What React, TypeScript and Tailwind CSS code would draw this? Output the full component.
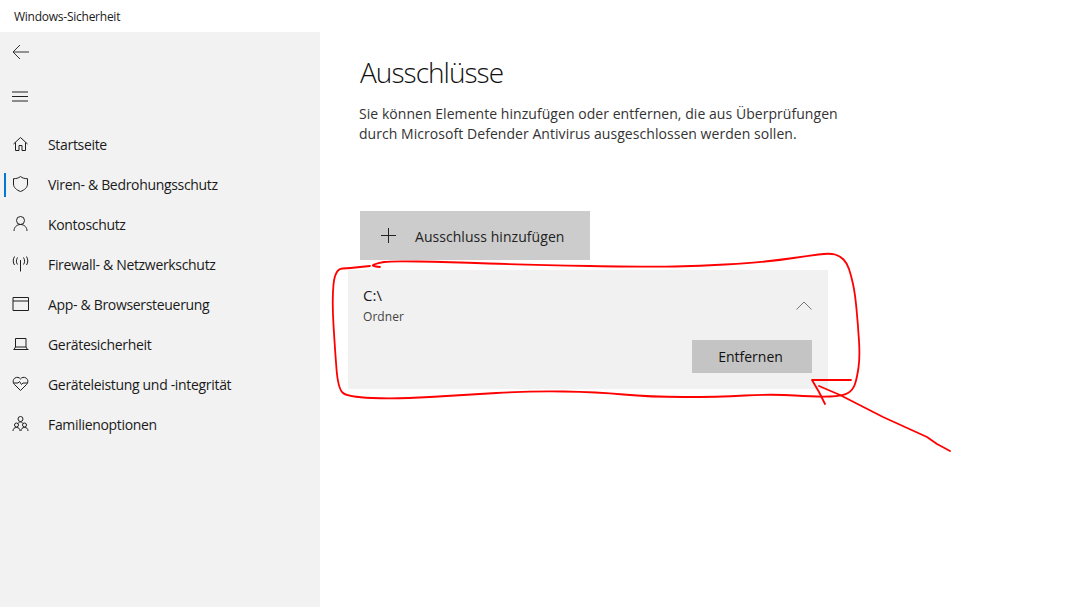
import type { ReactNode } from 'react'

type NavItem = { label: string; icon: ReactNode; active?: boolean }

function Glyph({ children }: { children: ReactNode }) {
  return (
    <svg width="18" height="18" viewBox="0 0 18 18" fill="none" stroke="#1f1f1f" strokeWidth="1" className="shrink-0">
      {children}
    </svg>
  )
}

const navItems: NavItem[] = [
  {
    label: 'Startseite',
    icon: <Glyph><path d="M1.5 9 8.5 2.5 15.5 9M3.5 7.5V15.5H7V10.5H10V15.5H13.5V7.5" /></Glyph>,
  },
  {
    label: 'Viren- & Bedrohungsschutz',
    active: true,
    icon: <Glyph><path d="M8.5 1.5C6.5 3.2 4 3.7 1.5 3.7V9C1.5 12.5 4.5 15 8.5 16.5 12.5 15 15.5 12.5 15.5 9V3.7C13 3.7 10.5 3.2 8.5 1.5Z" /></Glyph>,
  },
  {
    label: 'Kontoschutz',
    icon: <Glyph><circle cx="8.5" cy="5.5" r="4" /><path d="M2 16C2 12.5 4.5 9.5 8.5 9.5S15 12.5 15 16" /></Glyph>,
  },
  {
    label: 'Firewall- & Netzwerkschutz',
    icon: <Glyph><path d="M8.5 5V16.5M5.5 2.5C4 5 4 7.5 5.5 9.5M11.5 2.5C13 5 13 7.5 11.5 9.5M2.5 1.5C.8 4.5.8 7.5 2.5 10M14.5 1.5C16.2 4.5 16.2 7.5 14.5 10" /></Glyph>,
  },
  {
    label: 'App- & Browsersteuerung',
    icon: <Glyph><path d="M1 2.5H16.5V15.5H1ZM1 6H16.5" /></Glyph>,
  },
  {
    label: 'Gerätesicherheit',
    icon: <Glyph><path d="M3.5 3.5H14V12H3.5ZM1.5 14.5H16.5M3.5 12 2 14.5M14 12 15.5 14.5" /></Glyph>,
  },
  {
    label: 'Geräteleistung und -integrität',
    icon: <Glyph><path d="M8.5 15.5 2.5 9.5C.5 7.5.8 4.5 3 3 5 1.8 7.2 2.2 8.5 4 9.8 2.2 12 1.8 14 3 16.2 4.5 16.5 7.5 14.5 9.5ZM1.5 8H6L7.5 6.5 9.5 9.5 11 8H15.5" /></Glyph>,
  },
  {
    label: 'Familienoptionen',
    icon: <Glyph><circle cx="8.5" cy="4" r="2.5" /><circle cx="4.5" cy="10" r="2" /><circle cx="12.5" cy="10" r="2" /><path d="M1 16C1 13.5 2.5 12.5 4.5 12.5S8 13.5 8 16M9 16C9 13.5 10.5 12.5 12.5 12.5S16 13.5 16 16M6 8.5C6.5 7.5 7.5 7 8.5 7S10.5 7.5 11 8.5" /></Glyph>,
  },
]

const outline: [number, number][] = [
  [380, 267], [370, 266], [378, 263], [390, 261], [447, 262], [530, 265], [650, 267], [700, 266], [750, 263], [780, 260], [807, 256], [830, 253],
  [840, 256], [847, 263], [851, 275], [855, 293], [858, 325], [860, 357], [857, 378], [853, 390], [843, 396], [817, 397], [773, 394], [717, 397],
  [650, 397], [597, 392], [530, 391], [463, 395], [397, 399], [347, 397], [338, 388], [335, 350], [332, 300], [335, 269], [350, 268], [370, 266],
]

// rounds the hand-drawn line off through the midpoints
function smooth(points: [number, number][]) {
  let d = `M${points[0][0]} ${points[0][1]}`
  for (let i = 1; i < points.length - 1; i++) {
    const [x, y] = points[i]
    const [nx, ny] = points[i + 1]
    d += `Q${x} ${y} ${(x + nx) / 2} ${(y + ny) / 2}`
  }
  const [lx, ly] = points[points.length - 1]
  return `${d}L${lx} ${ly}`
}

function Annotation() {
  return (
    <svg width="1079" height="607" viewBox="0 0 1079 607" fill="none" stroke="#ff0000" strokeWidth="1.8" strokeLinejoin="round" strokeLinecap="round" className="pointer-events-none absolute left-0 top-0">
      <path d={smooth(outline)} />
      <path d="M851 380H812L819 392 825 404" />
      <path d="M819 386 840 395 883 417 927 437 937 444 950 451" />
    </svg>
  )
}

export default function App() {
  return (
    <div className="relative flex h-[607px] w-[1079px] flex-col overflow-hidden bg-white font-['Open_Sans','Liberation_Sans',sans-serif] text-[#1a1a1a]">
      <div className="flex h-8 shrink-0 items-center pl-[14px] pt-[2px] text-[12px] tracking-[-0.25px]">Windows-Sicherheit</div>
      <div className="flex min-h-0 flex-1">
        <aside className="flex w-[320px] shrink-0 flex-col bg-[#f2f2f2]">
          <div className="flex h-10 items-center pl-3">
            <svg width="18" height="16" viewBox="0 0 18 16" fill="none" stroke="#333" strokeWidth="1">
              <path d="M17 8H1M8 1 1 8 8 15" />
            </svg>
          </div>
          <div className="mt-1 flex h-10 items-center pl-3">
            <svg width="17" height="11" viewBox="0 0 17 11" fill="none" stroke="#222" strokeWidth="1">
              <path d="M0 1H16M0 5.5H16M0 10H16" />
            </svg>
          </div>
          <nav className="mt-2 flex flex-col">
            {navItems.map((item) => (
              <div key={item.label} className="relative flex h-10 items-center pl-[12px] text-[14px] tracking-[-0.32px]">
                {item.active && <span className="absolute left-1 top-[9px] h-6 w-[2px] bg-[#0078d4]" />}
                {item.icon}
                <span className="ml-[18px]">{item.label}</span>
              </div>
            ))}
          </nav>
        </aside>
        <main className="flex-1">
          <h1 className="ml-10 mt-5 text-[28px] font-light leading-10 tracking-[-0.95px] text-[#111]">Ausschlüsse</h1>
          <p className="ml-[39px] mt-3 text-[14px] leading-5 tracking-[0.05px] text-[#333]">
            Sie können Elemente hinzufügen oder entfernen, die aus Überprüfungen
            <br />
            durch Microsoft Defender Antivirus ausgeschlossen werden sollen.
          </p>
          <button className="ml-10 mt-[67px] flex h-[49px] w-[230px] items-center bg-[#cccccc] pl-[21px] text-[14px] tracking-[0.05px] text-[#222]">
            <svg width="15" height="15" viewBox="0 0 15 15" fill="none" stroke="#222" strokeWidth="1">
              <path d="M7.5 0V15M0 7.5H15" />
            </svg>
            <span className="ml-[19px] pt-[2px]">Ausschluss hinzufügen</span>
          </button>
          <section className="ml-7 mt-[10px] h-[119px] w-[480px] bg-[#f1f1f1] pl-[15px] pr-4 pt-[15px]">
            <div className="flex items-start justify-between">
              <div>
                <div className="text-[15px] leading-5">C:\</div>
                <div className="mt-[2px] text-[12px] leading-5 tracking-[0.05px] text-[#444]">Ordner</div>
              </div>
              <svg width="16" height="9" viewBox="0 0 16 9" fill="none" stroke="#777" strokeWidth="1" className="mt-4">
                <path d="M.5 8.5 8 1 15.5 8.5" />
              </svg>
            </div>
            <div className="mt-[13px] flex justify-end">
              <button className="h-[33px] w-[120px] bg-[#c4c4c4] pr-[3px] text-[14px] text-[#111]">Entfernen</button>
            </div>
          </section>
        </main>
      </div>
      <Annotation />
    </div>
  )
}
